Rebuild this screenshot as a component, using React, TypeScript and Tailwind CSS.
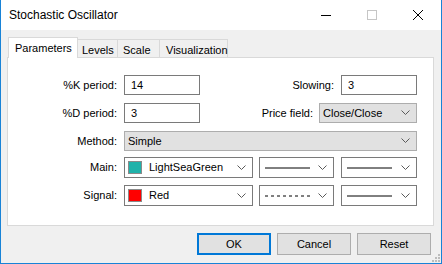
import React from "react";

const Chevron = () => (
  <svg width="9" height="6" viewBox="0 0 9 6" className="shrink-0">
    <polyline points="0.5,0.5 4.5,4.5 8.5,0.5" fill="none" stroke="#5a5a5a" strokeWidth="1" />
  </svg>
);

const Label = ({ children, w = "w-[109px]" }: { children: React.ReactNode; w?: string }) => (
  <div className={`${w} text-right shrink-0 leading-none`}>{children}</div>
);

const TextBox = ({ value, w }: { value: string; w: string }) => (
  <div className={`${w} h-[20px] border border-[#7a7a7a] bg-white flex items-center pl-[6px] shrink-0`}>{value}</div>
);

const GraySelect = ({ value, w }: { value: string; w: string }) => (
  <div className={`${w} h-[20px] border border-[#adadad] bg-[#e1e1e1] flex items-center pl-[3px] pr-[6px] shrink-0`}>
    <span className="flex-1">{value}</span>
    <Chevron />
  </div>
);

const ColorSelect = ({ color, name }: { color: string; name: string }) => (
  <div className="w-[129px] h-[21px] border border-[#7a7a7a] bg-white flex items-center pl-[3px] pr-[6px] shrink-0">
    <div className={`w-[14px] h-[13px] border border-[#8a8a8a] ${color}`} />
    <span className="flex-1 ml-[7px]">{name}</span>
    <Chevron />
  </div>
);

const StyleSelect = ({ w, dashed }: { w: string; dashed?: boolean }) => (
  <div className={`${w} h-[21px] border border-[#7a7a7a] bg-white flex items-center pl-[5px] pr-[6px] shrink-0`}>
    <div className="flex-1 flex items-center">
      <svg width="46" height="2" viewBox="0 0 46 2">
        <line x1="0" y1="1" x2="45" y2="1" stroke="#000" strokeWidth="1" strokeDasharray={dashed ? "3 3" : undefined} />
      </svg>
    </div>
    <Chevron />
  </div>
);

export default function App() {
  return (
    <div className="w-[442px] h-[264px] bg-[#f0f0f0] border-x border-b border-[#1883d7] flex flex-col relative font-['Liberation_Sans',Arial,sans-serif] text-[11px] text-black overflow-hidden">
      {/* Title bar */}
      <div className="h-[30px] bg-white flex items-center shrink-0">
        <div className="pl-[8px] text-[12px] leading-none">Stochastic Oscillator</div>
        <div className="ml-auto flex h-full">
          <div className="w-[46px] h-full flex items-center justify-center">
            <svg width="10" height="10" viewBox="0 0 10 10">
              <line x1="0" y1="5.5" x2="10" y2="5.5" stroke="#000" strokeWidth="1" />
            </svg>
          </div>
          <div className="w-[46px] h-full flex items-center justify-center">
            <svg width="10" height="10" viewBox="0 0 10 10">
              <rect x="0.5" y="0.5" width="9" height="9" fill="none" stroke="#c6c6c6" strokeWidth="1" />
            </svg>
          </div>
          <div className="w-[46px] h-full flex items-center justify-center">
            <svg width="10" height="10" viewBox="0 0 10 10">
              <line x1="0" y1="0" x2="10" y2="10" stroke="#000" strokeWidth="1" />
              <line x1="10" y1="0" x2="0" y2="10" stroke="#000" strokeWidth="1" />
            </svg>
          </div>
        </div>
      </div>

      {/* Tabs */}
      <div className="mt-[7px] flex items-end pl-[7px] h-[20px] shrink-0">
        <div className="w-[70px] h-[21px] border-t border-x border-[#d9d9d9] bg-white relative z-10 -mb-px pl-[6px] pt-[3px] leading-[14px]">
          Parameters
        </div>
        <div className="w-[40px] h-[18px] border-t border-r border-[#d9d9d9] pl-[4px] pt-[3px] leading-[14px]">Levels</div>
        <div className="w-[42px] h-[18px] border-t border-r border-[#d9d9d9] pl-[5px] pt-[3px] leading-[14px]">Scale</div>
        <div className="w-[68px] h-[18px] border-t border-r border-[#d9d9d9] pl-[6px] pt-[3px] leading-[14px]">Visualization</div>
      </div>

      {/* Panel */}
      <div className="ml-[6px] w-[427px] h-[169px] border border-[#d9d9d9] bg-white pt-[17px] pr-[16px] flex flex-col shrink-0">
        <div className="flex items-center">
          <Label>%K period:</Label>
          <div className="ml-[7px]"><TextBox value="14" w="w-[76px]" /></div>
          <div className="flex-1 text-right leading-none">Slowing:</div>
          <div className="ml-[7px]"><TextBox value="3" w="w-[76px]" /></div>
        </div>
        <div className="flex items-center mt-[8px]">
          <Label>%D period:</Label>
          <div className="ml-[7px]"><TextBox value="3" w="w-[76px]" /></div>
          <div className="flex-1 text-right leading-none">Price field:</div>
          <div className="ml-[6px]"><GraySelect value="Close/Close" w="w-[98px]" /></div>
        </div>
        <div className="flex items-center mt-[8px]">
          <Label>Method:</Label>
          <div className="ml-[7px] flex-1"><GraySelect value="Simple" w="w-full" /></div>
        </div>
        <div className="flex items-center mt-[6px]">
          <Label>Main:</Label>
          <div className="ml-[7px]"><ColorSelect color="bg-[#20b2aa]" name="LightSeaGreen" /></div>
          <div className="ml-[6px]"><StyleSelect w="w-[75px]" /></div>
          <div className="ml-[7px]"><StyleSelect w="w-[76px]" /></div>
        </div>
        <div className="flex items-center mt-[7px]">
          <Label>Signal:</Label>
          <div className="ml-[7px]"><ColorSelect color="bg-[#ff0000]" name="Red" /></div>
          <div className="ml-[6px]"><StyleSelect w="w-[75px]" dashed /></div>
          <div className="ml-[7px]"><StyleSelect w="w-[76px]" /></div>
        </div>
      </div>

      {/* Buttons */}
      <div className="mt-[7px] flex justify-end pr-[10px] gap-[6px]">
        <div className="w-[74px] h-[22px] border-2 border-[#0078d7] bg-[#e1e1e1] flex items-center justify-center">OK</div>
        <div className="w-[74px] h-[22px] border border-[#adadad] bg-[#e1e1e1] flex items-center justify-center">Cancel</div>
        <div className="w-[74px] h-[22px] border border-[#adadad] bg-[#e1e1e1] flex items-center justify-center">Reset</div>
      </div>

      {/* Resize grip */}
      <svg width="8" height="8" viewBox="0 0 8 8" className="absolute right-[1px] bottom-[1px]">
        <rect x="6" y="0" width="2" height="2" fill="#bcbcbc" />
        <rect x="3" y="3" width="2" height="2" fill="#bcbcbc" />
        <rect x="6" y="3" width="2" height="2" fill="#bcbcbc" />
        <rect x="0" y="6" width="2" height="2" fill="#bcbcbc" />
        <rect x="3" y="6" width="2" height="2" fill="#bcbcbc" />
        <rect x="6" y="6" width="2" height="2" fill="#bcbcbc" />
      </svg>
    </div>
  );
}
